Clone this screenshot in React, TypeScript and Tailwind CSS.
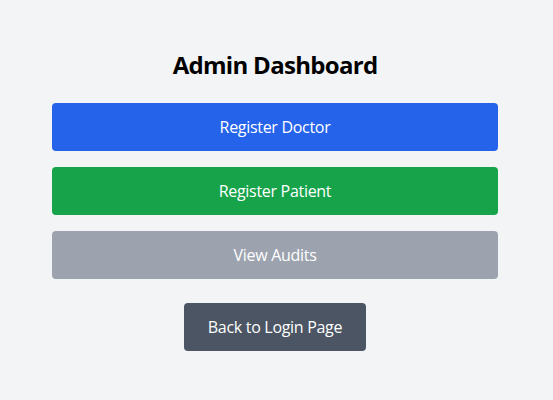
import React from 'react';

const App: React.FC = () => {
  return (
    <div
      className="min-h-screen bg-[#f3f4f6] pt-[49px] pl-[52px]"
      style={{ fontFamily: '"Segoe UI", "Open Sans", sans-serif' }}
    >
      <div className="w-[446px] flex flex-col items-center">
        <h1 className="text-2xl leading-8 font-bold text-black tracking-[-0.7px] mb-[22px]">Admin Dashboard</h1>
        <div className="w-full flex flex-col gap-4 tracking-[-0.3px]">
          <button className="w-full h-12 rounded bg-[#2563eb] text-white text-base">Register Doctor</button>
          <button className="w-full h-12 rounded bg-[#16a34a] text-white text-base">Register Patient</button>
          <button className="w-full h-12 rounded bg-[#9ca3af] text-white text-base">View Audits</button>
        </div>
        <button className="mt-6 h-12 w-[182px] rounded bg-[#4b5563] text-white text-base tracking-[-0.3px]">
          Back to Login Page
        </button>
      </div>
    </div>
  );
};

export default App;
